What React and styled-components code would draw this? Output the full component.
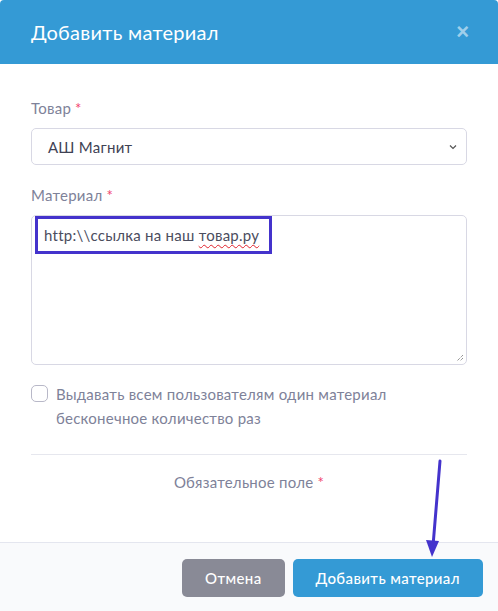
import styled, { createGlobalStyle } from "styled-components";

const Global = createGlobalStyle`
    html, body {
        margin: 0;
        padding: 0;
        background: #ffffff;
    }

    body {
        font-family: Lato, "Noto Sans", sans-serif;
        letter-spacing: 0.25px;
    }
`;

const Modal = styled.div`
    display: flex;
    flex-direction: column;
    width: 498px;
    height: 611px;
    background: #ffffff;
    border-radius: 4px 4px 0 0;
    overflow: hidden;
    position: relative;
`;

const Header = styled.div`
    display: flex;
    align-items: center;
    justify-content: space-between;
    height: 64px;
    padding: 0 31px;
    background: #349ad5;
    box-sizing: border-box;

    h3 {
        margin: 0;
        color: #ffffff;
        font-size: 20px;
        font-weight: 400;
        letter-spacing: 0.3px;
    }
`;

const Close = styled.button`
    border: 0;
    background: none;
    padding: 0;
    margin-right: -2px;
    color: rgba(255, 255, 255, 0.55);
    font-size: 22px;
    font-weight: 700;
    line-height: 1;
    cursor: pointer;
`;

const Body = styled.div`
    flex: 1;
    padding: 35px 31px 0 31px;
    display: flex;
    flex-direction: column;
`;

const Label = styled.label`
    display: block;
    color: #7e8299;
    font-size: 15px;
    margin-bottom: 11px;
    line-height: 18px;

    span {
        color: #f1416c;
        margin-left: 4px;
    }
`;

const Select = styled.div`
    display: flex;
    align-items: center;
    justify-content: space-between;
    height: 37px;
    padding: 0 8px 0 16px;
    border: 1px solid #d8d8e4;
    border-radius: 5px;
    box-sizing: border-box;
    color: #3f4254;
    font-size: 15px;
    margin-bottom: 21px;
`;

const TextArea = styled.div`
    position: relative;
    height: 150px;
    border: 1px solid #d8d8e4;
    border-radius: 5px;
    box-sizing: border-box;
    padding: 0 3px;
    margin-bottom: 17px;
`;

const Highlight = styled.div`
    display: inline-flex;
    align-items: center;
    height: 38px;
    width: 237px;
    box-sizing: border-box;
    border: 3px solid #4433cc;
    padding-left: 6px;
    color: #4b4d5e;
    font-size: 15px;
`;

const Misspelled = styled.span`
    text-decoration: underline wavy #e0222c;
    text-decoration-thickness: 1px;
    text-underline-offset: 3px;
`;

const Grip = styled.svg`
    position: absolute;
    right: 2px;
    bottom: 2px;
`;

const Check = styled.div`
    display: flex;
    gap: 8px;
    color: #7e8299;
    font-size: 15px;
    line-height: 24px;
    padding-bottom: 24px;
    border-bottom: 1px solid #e6e7ee;

    i {
        flex: none;
        width: 17px;
        height: 17px;
        margin-top: 3px;
        border: 1px solid #b8b8c8;
        border-radius: 5px;
        box-sizing: border-box;
    }
`;

const Note = styled.div`
    text-align: center;
    color: #7e8299;
    font-size: 15px;
    margin-top: 18px;

    span {
        color: #f1416c;
        margin-left: 4px;
    }
`;

const Footer = styled.div`
    display: flex;
    justify-content: flex-end;
    align-items: flex-start;
    gap: 8px;
    height: 69px;
    padding: 16px 15px 0 0;
    box-sizing: border-box;
    background: #f9fafc;
    border-top: 1px solid #e4e6ef;
`;

const Button = styled.button`
    height: 38px;
    padding: 0 23px;
    border: 0;
    border-radius: 5px;
    background: ${(p) => (p.$primary ? "#349ad5" : "#898a96")};
    color: #ffffff;
    font-family: Lato, "Noto Sans", sans-serif;
    font-size: 15px;
    font-weight: 500;
    letter-spacing: 0.4px;
    cursor: pointer;
`;

const Arrow = styled.svg`
    position: absolute;
    left: 422px;
    top: 458px;
`;

export default function App() {
    return (
        <>
            <Global />
            <Modal>
                <Header>
                    <h3>Добавить материал</h3>
                    <Close>×</Close>
                </Header>
                <Body>
                    <Label>
                        Товар<span>*</span>
                    </Label>
                    <Select>
                        АШ Магнит
                        <svg width="10" height="10" viewBox="0 0 10 10">
                            <path d="M2 3.5 L5 6.5 L8 3.5" fill="none" stroke="#555" strokeWidth="1.2" />
                        </svg>
                    </Select>
                    <Label>
                        Материал<span>*</span>
                    </Label>
                    <TextArea>
                        <Highlight>
                            http:\\ссылка на наш&nbsp;<Misspelled>товар.ру</Misspelled>
                        </Highlight>
                        <Grip width="9" height="9" viewBox="0 0 9 9">
                            <path d="M8 2 L2 8 M8 5 L5 8" stroke="#666" strokeWidth="1" strokeDasharray="1 1" />
                        </Grip>
                    </TextArea>
                    <Check>
                        <i />
                        <div>
                            Выдавать всем пользователям один материал
                            <br />
                            бесконечное количество раз
                        </div>
                    </Check>
                    <Note>
                        Обязательное поле<span>*</span>
                    </Note>
                </Body>
                <Footer>
                    <Button>Отмена</Button>
                    <Button $primary>Добавить материал</Button>
                </Footer>
                {/* стрелка-указатель поверх */}
                <Arrow width="26" height="102" viewBox="0 0 26 102">
                    <path d="M18 3 L11 88" stroke="#4433cc" strokeWidth="3" strokeLinecap="round" />
                    <path d="M4 82 L10 99 L17 83 Z" fill="#4433cc" />
                </Arrow>
            </Modal>
        </>
    );
}
